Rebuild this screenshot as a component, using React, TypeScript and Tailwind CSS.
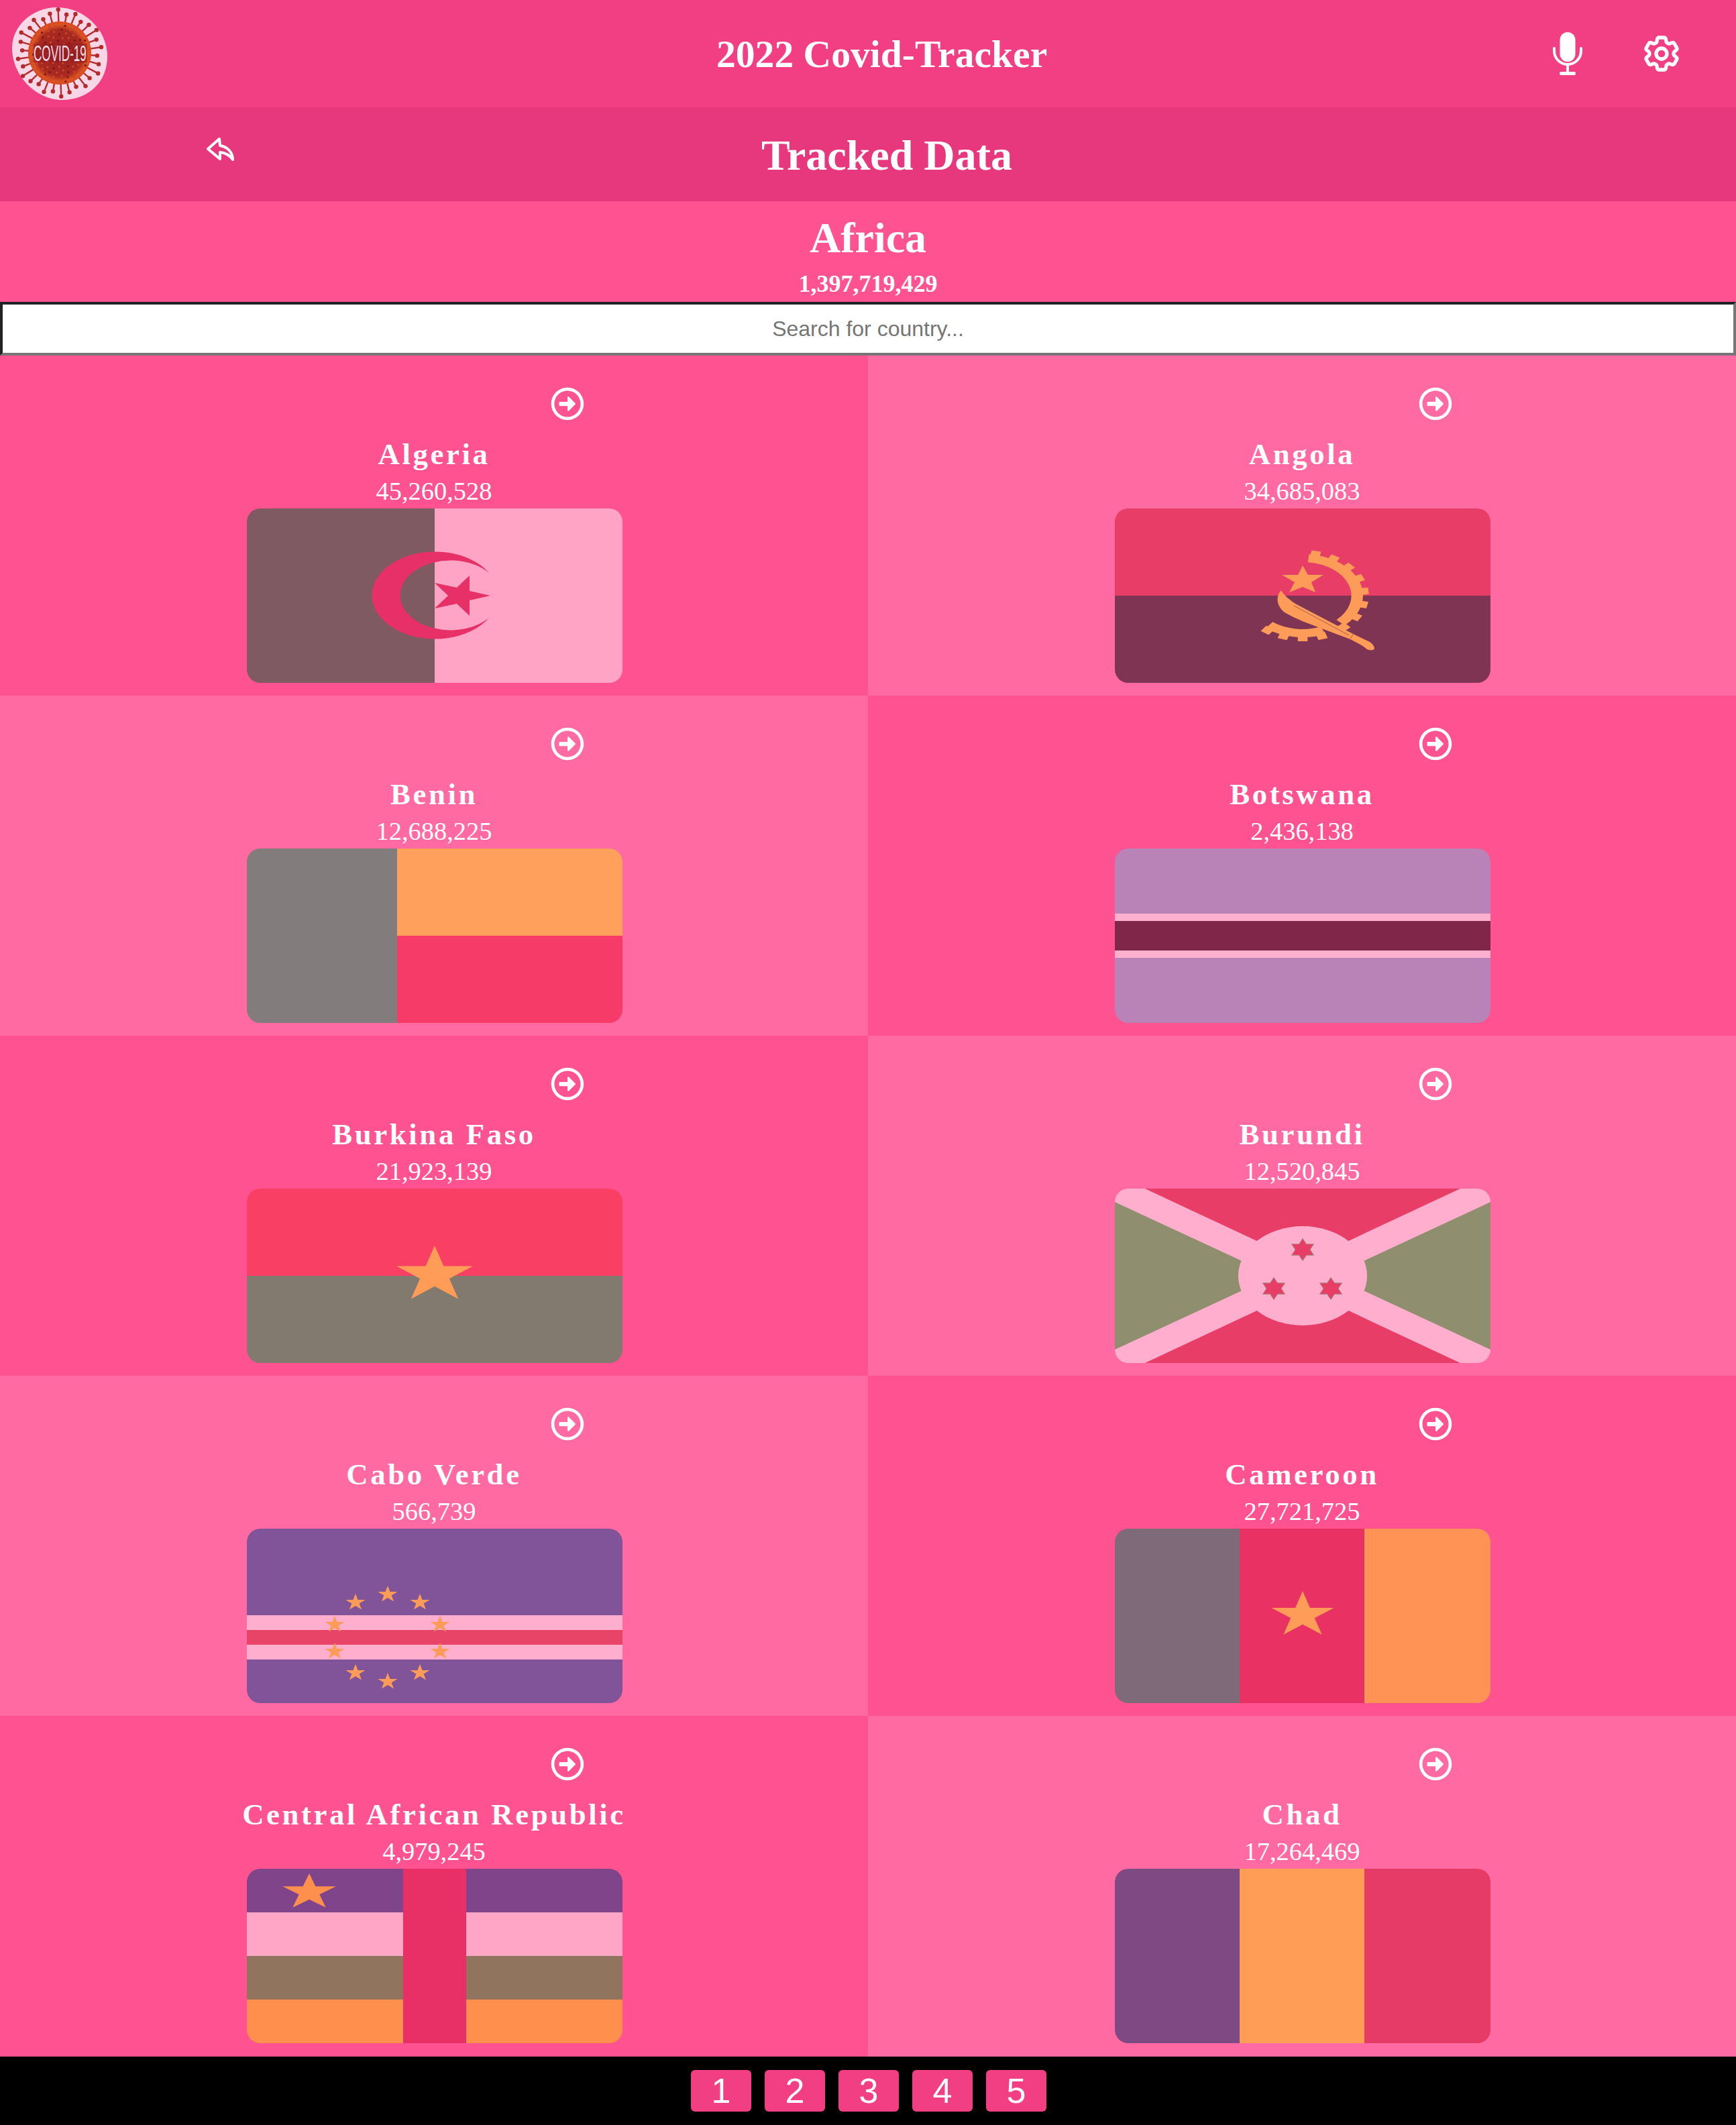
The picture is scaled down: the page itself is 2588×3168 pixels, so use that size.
import React from 'react';
import { HiOutlineCog6Tooth } from 'react-icons/hi2';
import { FaRegArrowAltCircleRight } from 'react-icons/fa';

const serif = "font-['Liberation_Serif',serif]";

// n-point star as a polygon string, rx/ry because the flags are stretched
function starPoints(cx: number, cy: number, rx: number, ry: number, n = 5, inner = 0.382) {
  const pts: string[] = [];
  for (let i = 0; i < n * 2; i++) {
    const a = -Math.PI / 2 + (i * Math.PI) / n;
    const r = i % 2 === 0 ? 1 : inner;
    pts.push(`${(cx + Math.cos(a) * rx * r).toFixed(1)},${(cy + Math.sin(a) * ry * r).toFixed(1)}`);
  }
  return pts.join(' ');
}

function Star({ cx, cy, rx, ry, fill }: { cx: number; cy: number; rx: number; ry: number; fill: string }) {
  return <polygon points={starPoints(cx, cy, rx, ry)} fill={fill} />;
}

function Algeria() {
  return (
    <>
      <rect width="280" height="260" fill="#7f5a63" />
      <rect x="280" width="280" height="260" fill="#ffa4c5" />
      <path d="M361,96 A94,65 0 1 0 361,163 A75,52 0 1 1 361,96 Z" fill="#e63067" />
      <polygon points="363,130 332,137 332,160 313,142 280,149 300,130 280,111 313,118 332,100 332,123" fill="#e63067" />
    </>
  );
}

function Angola() {
  const c = '#fd9c59';
  const upper = Array.from({ length: 8 }, (_, i) => -78 + i * 18);
  const lower = [125, 108, 90, 72];
  const arc = (from: number, to: number, r: number) => {
    const p = (d: number) => `${(Math.cos((d * Math.PI) / 180) * r).toFixed(1)},${(Math.sin((d * Math.PI) / 180) * r).toFixed(1)}`;
    return `M${p(from)} A${r},${r} 0 0 1 ${p(to)}`;
  };
  return (
    <>
      <rect width="560" height="130" fill="#e73d66" />
      <rect y="130" width="560" height="130" fill="#7e3452" />
      <g transform="translate(280,130) scale(1.45,1)">
        <path d={arc(-84, 46, 56)} fill="none" stroke={c} strokeWidth="12" />
        <path d={arc(68, 128, 56)} fill="none" stroke={c} strokeWidth="12" />
        {[...upper, ...lower].map((d) => (
          <rect key={d} x="58" y="-5" width="10" height="10" fill={c} transform={`rotate(${d})`} />
        ))}
      </g>
      <polygon points="280,85 288,99 311,99 293,110 299,125 280,117 260,125 268,110 249,99 273,99" fill={c} />
      <path d="M248,122 C240,130 240,145 253,155 C270,165 290,172 303,177 L351,195 C358,199 368,203 376,210 C381,212 387,212 387,208 C386,204 383,201 380,199 L355,187 L269,142 C262,137 252,130 248,122 Z" fill={c} />
      <path d="M267,145 L349,189" stroke="#a8604f" strokeWidth="1" />
      <path d="M350,196 L356,186" stroke="#a8604f" strokeWidth="1" />
    </>
  );
}

function Benin() {
  return (
    <>
      <rect width="224" height="260" fill="#837c7d" />
      <rect x="224" width="336" height="130" fill="#ffa05c" />
      <rect x="224" y="130" width="336" height="130" fill="#f73b68" />
    </>
  );
}

function Botswana() {
  return (
    <>
      <rect width="560" height="260" fill="#b983b7" />
      <rect y="97" width="560" height="66" fill="#ffb0cf" />
      <rect y="108" width="560" height="44" fill="#802648" />
    </>
  );
}

function Burkina() {
  return (
    <>
      <rect width="560" height="130" fill="#f93f64" />
      <rect y="130" width="560" height="130" fill="#827a6e" />
      <Star cx={280} cy={129} rx={60} ry={44} fill="#ff9c57" />
    </>
  );
}

function Burundi() {
  const stars = [
    [280, 91],
    [237, 149],
    [322, 149],
  ];
  return (
    <>
      <rect width="560" height="260" fill="#ffaecd" />
      <polygon points="45,0 515,0 280,110" fill="#e73d66" />
      <polygon points="45,260 515,260 280,150" fill="#e73d66" />
      <polygon points="0,20 237,130 0,240" fill="#8f8f70" />
      <polygon points="560,20 323,130 560,240" fill="#8f8f70" />
      <ellipse cx="280" cy="130" rx="96" ry="74" fill="#ffaecd" />
      {stars.map(([x, y]) => (
        <polygon key={x} points={starPoints(x, y, 19, 16.5, 6, 0.577)} fill="#e73d66" stroke="#9a8a78" strokeWidth="1" />
      ))}
    </>
  );
}

function CaboVerde() {
  const stars = [
    [210, 98],
    [162, 110],
    [258, 110],
    [131, 143],
    [288, 143],
    [131, 183],
    [288, 183],
    [162, 215],
    [258, 215],
    [210, 228],
  ];
  return (
    <>
      <rect width="560" height="260" fill="#815399" />
      <rect y="129" width="560" height="66" fill="#ffaecd" />
      <rect y="151" width="560" height="22" fill="#e84468" />
      {stars.map(([x, y]) => (
        <Star key={`${x}-${y}`} cx={x} cy={y} rx={15.5} ry={13} fill="#fd9c59" />
      ))}
    </>
  );
}

function Cameroon() {
  return (
    <>
      <rect width="186" height="260" fill="#7f6a7a" />
      <rect x="186" width="186" height="260" fill="#e93163" />
      <rect x="372" width="188" height="260" fill="#ff9254" />
      <Star cx={280} cy={129} rx={49} ry={36} fill="#ff9c57" />
    </>
  );
}

function CentralAfrican() {
  return (
    <>
      <rect width="560" height="65" fill="#80448b" />
      <rect y="65" width="560" height="65" fill="#ffa5c6" />
      <rect y="130" width="560" height="65" fill="#90745e" />
      <rect y="195" width="560" height="65" fill="#ff8f4c" />
      <rect x="233" width="94" height="260" fill="#e83067" />
      <Star cx={93} cy={35} rx={42} ry={28} fill="#ff8f4c" />
    </>
  );
}

function Chad() {
  return (
    <>
      <rect width="186" height="260" fill="#7f4a84" />
      <rect x="186" width="186" height="260" fill="#ff9c55" />
      <rect x="372" width="188" height="260" fill="#e63b66" />
    </>
  );
}

const countries = [
  { name: 'Algeria', cases: '45,260,528', flag: <Algeria /> },
  { name: 'Angola', cases: '34,685,083', flag: <Angola /> },
  { name: 'Benin', cases: '12,688,225', flag: <Benin /> },
  { name: 'Botswana', cases: '2,436,138', flag: <Botswana /> },
  { name: 'Burkina Faso', cases: '21,923,139', flag: <Burkina /> },
  { name: 'Burundi', cases: '12,520,845', flag: <Burundi /> },
  { name: 'Cabo Verde', cases: '566,739', flag: <CaboVerde /> },
  { name: 'Cameroon', cases: '27,721,725', flag: <Cameroon /> },
  { name: 'Central African Republic', cases: '4,979,245', flag: <CentralAfrican /> },
  { name: 'Chad', cases: '17,264,469', flag: <Chad /> },
];

function Logo() {
  const spikes = Array.from({ length: 30 }, (_, i) => {
    const a = (i / 30) * Math.PI * 2 + 0.07;
    const r = 56 + ((i * 7) % 5) * 2.2;
    return { x1: 89 + Math.cos(a) * 46, y1: 80 + Math.sin(a) * 46, x2: 89 + Math.cos(a) * r, y2: 80 + Math.sin(a) * r };
  });
  const specks = Array.from({ length: 90 }, (_, i) => {
    const a = i * 2.399;
    const r = 44 * Math.sqrt((i + 0.5) / 90);
    return { x: 89 + Math.cos(a) * r, y: 80 + Math.sin(a) * r, dark: i % 3 === 0 };
  });
  return (
    <svg width="142" height="138" viewBox="18 12 142 138" className="ml-[18px] shrink-0">
      <defs>
        <radialGradient id="core">
          <stop offset="0%" stopColor="#9c1f24" />
          <stop offset="74%" stopColor="#a92a20" />
          <stop offset="90%" stopColor="#dc5423" />
          <stop offset="100%" stopColor="#d9481f" />
        </radialGradient>
      </defs>
      <path d="M85,12 C125,12 160,45 160,85 C160,125 130,150 92,150 C55,150 18,115 18,72 C18,40 48,12 85,12 Z" fill="#f7d6e6" />
      {spikes.map((s, i) => (
        <g key={i}>
          <line x1={s.x1} y1={s.y1} x2={s.x2} y2={s.y2} stroke="#b42b2e" strokeWidth="2.4" />
          <circle cx={s.x2} cy={s.y2} r="3.2" fill="#b42b2e" />
        </g>
      ))}
      <circle cx="89" cy="80" r="47" fill="url(#core)" />
      {specks.map((s, i) => (
        <circle key={i} cx={s.x} cy={s.y} r="1.6" fill={s.dark ? '#7d1519' : '#c9472a'} />
      ))}
      <rect x="50" y="66" width="80" height="28" fill="#8f1b22" opacity="0.55" />
      <text transform="translate(50,92) scale(0.503,1)" fontFamily="'Liberation Sans',sans-serif" fontSize="34" fill="#f3dfe8">
        COVID-19
      </text>
    </svg>
  );
}

function CountryCard({ c, index }: { c: (typeof countries)[number]; index: number }) {
  const row = Math.floor(index / 2);
  const col = index % 2;
  const alt = (row + col) % 2 === 1;
  return (
    <div className={`flex flex-col items-center h-[507px] [&:nth-last-child(-n+2)]:h-[508px] pt-[47px] ${alt ? 'bg-[#ff6aa2]' : 'bg-[#ff5291]'}`}>
      <FaRegArrowAltCircleRight className="ml-[398px] text-white w-[50px] h-[50px] shrink-0" />
      <div className={`${serif} mt-[25px] text-[44.8px] leading-[50px] font-bold tracking-[3.6px] text-white whitespace-nowrap`}>{c.name}</div>
      <div className={`${serif} mt-[8px] text-[38.4px] leading-[44px] text-white`}>{c.cases}</div>
      <svg viewBox="0 0 560 260" width="560" height="260" className="mt-[4px] ml-[2px] rounded-[20px] shrink-0">
        {c.flag}
      </svg>
    </div>
  );
}

export default function App() {
  return (
    <div className="flex flex-col w-[2588px] h-[3168px] overflow-hidden bg-[#ff5291]">
      <header className="flex items-center h-[160px] bg-[#f23f84] text-white">
        <Logo />
        <h1 className={`${serif} ml-[908px] pt-[3px] text-[57.6px] font-bold whitespace-nowrap`}>2022 Covid-Tracker</h1>
        <svg viewBox="0 0 44 64" width="44" height="64" className="ml-[754px] shrink-0" fill="white">
          <rect x="10.5" y="0" width="23" height="44" rx="11.5" />
          <path d="M2,24 v4 a20,20 0 0 0 40,0 v-4" fill="none" stroke="white" strokeWidth="4" strokeLinecap="round" />
          <rect x="20" y="48" width="4" height="12" />
          <rect x="10" y="59" width="24" height="5" rx="2" />
        </svg>
        <HiOutlineCog6Tooth strokeWidth={2} className="ml-[86px] w-[64px] h-[64px] shrink-0" />
      </header>

      <div className="flex items-center h-[140px] bg-[#e8387d] text-white">
        <svg viewBox="0 0 42 36" width="42" height="36" className="ml-[307px] mb-[16px] shrink-0" fill="none" stroke="white" strokeWidth="4" strokeLinejoin="round" strokeLinecap="round">
          <path d="M3,18 L20,3 L21,13 C33,15 40,24 40,34 C36,28 30,24 21,23 L21,33 Z" />
        </svg>
        <h2 className={`${serif} ml-[786px] pt-[4px] text-[64px] font-bold whitespace-nowrap`}>Tracked Data</h2>
      </div>

      <div className={`${serif} flex flex-col items-center h-[150px] pt-[18px] text-white font-bold`}>
        <div className="text-[64px] leading-[74px]">Africa</div>
        <div className="text-[36px] leading-[42px] mt-[10px]">1,397,719,429</div>
      </div>

      <input
        placeholder="Search for country..."
        className="block w-full h-[80px] bg-white border-4 border-t-[#222222] border-l-[#222222] border-b-[#767676] border-r-[#767676] text-center text-[32px] font-['Liberation_Sans',sans-serif] placeholder:text-[#757575] outline-none"
      />

      <div className="grid grid-cols-2">
        {countries.map((c, i) => (
          <CountryCard key={c.name} c={c} index={i} />
        ))}
      </div>

      <footer className="flex flex-1 items-center justify-center gap-[20px] pl-[2px] bg-black">
        {[1, 2, 3, 4, 5].map((n) => (
          <button key={n} className="w-[90px] h-[62px] rounded-[6px] bg-[#f23f84] text-white text-[52px] leading-[62px] font-['Liberation_Sans',sans-serif]">
            {n}
          </button>
        ))}
      </footer>
    </div>
  );
}
